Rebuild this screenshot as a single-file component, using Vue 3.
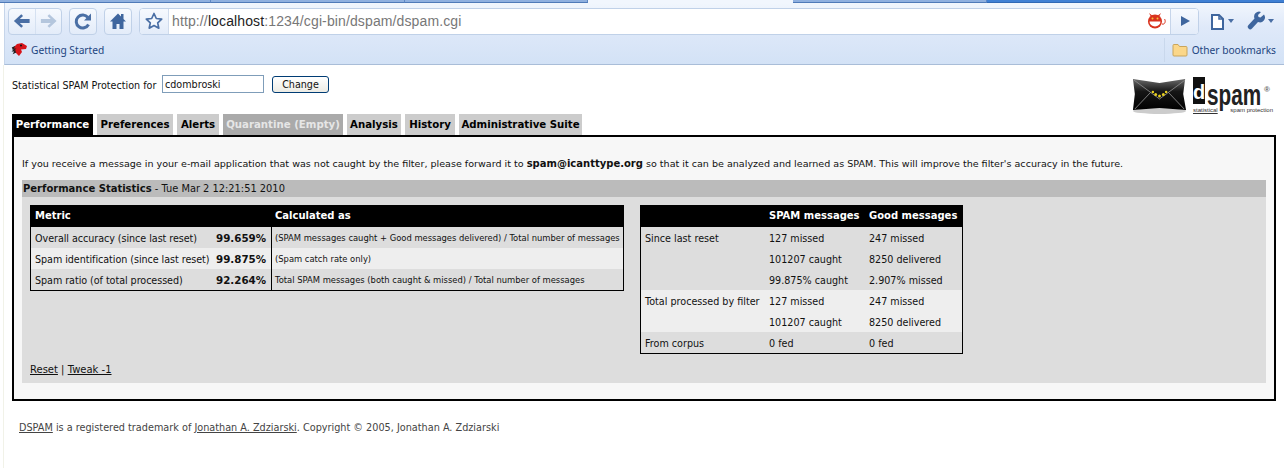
<script setup>
const tabs = [
  { label: 'Performance', cls: 'active', w: 81 },
  { label: 'Preferences', cls: '', w: 76 },
  { label: 'Alerts', cls: '', w: 42 },
  { label: 'Quarantine (Empty)', cls: 'dim', w: 120 },
  { label: 'Analysis', cls: '', w: 54 },
  { label: 'History', cls: '', w: 50 },
  { label: 'Administrative Suite', cls: '', w: 123 }
]
const metrics = [
  ['Overall accuracy (since last reset)', '99.659%', '(SPAM messages caught + Good messages delivered) / Total number of messages'],
  ['Spam identification (since last reset)', '99.875%', '(Spam catch rate only)'],
  ['Spam ratio (of total processed)', '92.264%', 'Total SPAM messages (both caught & missed) / Total number of messages']
]
const counts = [
  ['Since last reset', '127 missed', '247 missed', 'a'],
  ['', '101207 caught', '8250 delivered', 'a'],
  ['', '99.875% caught', '2.907% missed', 'a'],
  ['Total processed by filter', '127 missed', '247 missed', 'b'],
  ['', '101207 caught', '8250 delivered', 'b'],
  ['From corpus', '0 fed', '0 fed', 'a']
]
</script>

<template>
  <div class="window">
    <div class="tabstrip">
      <span class="ctab w1"></span>
      <span class="ctab w2"></span>
      <span class="ctab w3"></span>
      <span class="ctab open"></span>
      <span class="ctab w2"></span>
      <span class="ctab rest"></span>
    </div>
    <div class="chrome">
      <div class="toolbar">
        <div class="btn pair">
          <svg width="26" height="26" viewBox="0 0 26 26"><path d="M5 13l7.500-7 1.800 1.800-3.300 3.200H21v4H11l3.300 3.200-1.800 1.800z" fill="#4a6fa5"/></svg>
          <span class="sep"></span>
          <svg width="26" height="26" viewBox="0 0 26 26"><path d="M21 13l-7.500-7-1.800 1.800 3.300 3.200H5v4h10l-3.300 3.200 1.800 1.800z" fill="#b4c6dd"/></svg>
        </div>
        <div class="btn single">
          <svg width="24" height="24" viewBox="0 0 24 24"><path d="M17.500 15.500a6.500 6.500 0 1 1-.6-7" fill="none" stroke="#4a6fa5" stroke-width="3"/><path d="M20 4.500v7h-7z" fill="#4a6fa5"/></svg>
        </div>
        <div class="btn single">
          <svg width="24" height="24" viewBox="0 0 24 24"><path d="M12 4.500L4 12.500h2.500V20h4v-5h3v5h4v-7.500H20l-2.500-2.500V5h-2.500v2.500z" fill="#3f669e"/></svg>
        </div>
        <div class="omnibox">
          <div class="star">
            <svg width="20" height="20" viewBox="0 0 20 20"><path d="M10 2.500l2.300 5 5.400.6-4 3.700 1.100 5.400L10 14.500l-4.800 2.700 1.100-5.400-4-3.700 5.400-.6z" fill="#f4f8fd" stroke="#4a6fa5" stroke-width="1.700" stroke-linejoin="round"/></svg>
          </div>
          <div class="url"><span class="gray">http://</span><span class="host">localhost</span><span class="gray">:1234/cgi-bin/dspam/dspam.cgi</span></div>
          <svg class="devil" width="20" height="16" viewBox="0 0 20 16"><circle cx="8" cy="8.500" r="7" fill="#d9331e"/><path d="M2 0l2 4h3zM14 0l-2 4H9z" fill="#d9331e"/><path d="M2.500 8.500h11a5.500 5 0 0 1-11 0z" fill="#fff"/><circle cx="5.500" cy="5.500" r="1" fill="#f5c33b"/><circle cx="10.500" cy="5.500" r="1" fill="#f5c33b"/><path d="M15 11c3 1 4-3 2.500-5" fill="none" stroke="#d9331e"/></svg>
          <div class="go">
            <svg width="14" height="14" viewBox="0 0 14 14"><path d="M3 2l9 5-9 5z" fill="#3f669e"/></svg>
          </div>
        </div>
        <div class="menu first">
          <svg width="19" height="21" viewBox="0 0 19 21"><path d="M3 4h7l4 4v10H3z" fill="#fff" stroke="#3f669e" stroke-width="2"/><path d="M10 4v4h4" fill="none" stroke="#3f669e" stroke-width="1.500"/></svg>
          <i class="caret"></i>
        </div>
        <div class="menu second">
          <svg width="20" height="20" viewBox="0 0 20 20"><path d="M17 3.500l-3.500 3-2-.5-.5-2 3-3a5 5 0 0 0-6.500 6.500L1.500 14a2.400 2.400 0 0 0 3.500 3.500L11 11a5 5 0 0 0 6-7.500z" fill="#3f669e"/></svg>
          <i class="caret"></i>
        </div>
      </div>
      <div class="bookmarks">
        <div class="mark">
          <svg width="17" height="15" viewBox="0 0 17 15"><path d="M3 9V5l3-3 5-1 5 3-1 3-5 .5 1 2.500-3 4-3-3z" fill="#d7141a"/><path d="M1 6l2-1-1 2 2 0-2 2 2 0-1 2 2-1" fill="none" stroke="#222" stroke-width="1.200"/><circle cx="10" cy="3.500" r="1" fill="#111"/></svg>
          <span>Getting Started</span>
        </div>
        <div class="mark other">
          <svg width="16" height="14" viewBox="0 0 16 14"><path d="M1 2.500q0-1 1-1h4l1.500 2H14q1 0 1 1V12q0 1-1 1H2q-1 0-1-1z" fill="#fbd78a" stroke="#c9a55c"/></svg>
          <span>Other bookmarks</span>
        </div>
      </div>
    </div>

    <main class="page">
      <header class="top">
        <form class="who" @submit.prevent>
          <label>Statistical SPAM Protection for</label>
          <input value="cdombroski" />
          <button type="button">Change</button>
        </form>
        <div class="logo">
          <svg class="envelope" width="55" height="36" viewBox="0 0 58 36" preserveAspectRatio="none">
            <defs><linearGradient id="env" x1="0" y1="0" x2="0" y2="1"><stop offset="0" stop-color="#6a6a6a"/><stop offset=".4" stop-color="#161616"/><stop offset="1" stop-color="#000"/></linearGradient></defs>
            <ellipse cx="29" cy="33" rx="28" ry="3" fill="#ccc"/>
            <path d="M1 1l28 4 27-4-2 15 3 16-28-2-28 2 2-16z" fill="url(#env)"/>
            <path d="M2 2l27 19L56 2M3 31l17-17M55 31L38 14" fill="none" stroke="#8a8a8a" stroke-width=".9"/>
            <circle cx="22" cy="14" r="1.300" fill="#e8d020"/><circle cx="25" cy="16.500" r="1.500" fill="#e8d020"/><circle cx="29" cy="18" r="1.500" fill="#e8d020"/><circle cx="33" cy="16.500" r="1.500" fill="#e8d020"/><circle cx="36" cy="14" r="1.300" fill="#e8d020"/>
          </svg>
          <div class="wordmark">
            <div class="word"><span class="d">d</span><span class="spam">spam</span><span class="reg">®</span></div>
            <div class="tag"><span class="st">statistical</span><span>spam protection</span></div>
          </div>
        </div>
      </header>

      <nav class="tabs">
        <a v-for="t in tabs" :key="t.label" :class="t.cls" :style="{ width: t.w + 'px' }">{{ t.label }}</a>
      </nav>

      <section class="box">
        <p class="intro">If you receive a message in your e-mail application that was not caught by the filter, please forward it to <b>spam@icanttype.org</b> so that it can be analyzed and learned as SPAM. This will improve the filter's accuracy in the future.</p>
        <div class="panel">
          <h2><b>Performance Statistics</b> - Tue Mar 2 12:21:51 2010</h2>
          <div class="body">
            <div class="tables">
              <table class="t1">
                <thead><tr><th>Metric</th><th></th><th class="calc">Calculated as</th></tr></thead>
                <tbody>
                  <tr v-for="(m, i) in metrics" :key="i" :class="i === 1 ? 'b' : 'a'">
                    <td class="name">{{ m[0] }}</td><td class="val">{{ m[1] }}</td><td class="formula">{{ m[2] }}</td>
                  </tr>
                </tbody>
              </table>
              <table class="t2">
                <thead><tr><th></th><th>SPAM messages</th><th>Good messages</th></tr></thead>
                <tbody>
                  <tr v-for="(r, i) in counts" :key="i" :class="r[3]">
                    <td>{{ r[0] }}</td><td>{{ r[1] }}</td><td>{{ r[2] }}</td>
                  </tr>
                </tbody>
              </table>
            </div>
            <div class="links"><a>Reset</a> | <a>Tweak -1</a></div>
          </div>
        </div>
      </section>

      <footer class="foot"><a>DSPAM</a> is a registered trademark of <a>Jonathan A. Zdziarski</a>. Copyright © 2005, Jonathan A. Zdziarski</footer>
    </main>
  </div>
</template>

<style>
html, body { margin: 0; background: #fff; overflow: hidden; }
</style>

<style scoped>
.window { width: 1284px; height: 468px; overflow: hidden; font-family: "DejaVu Sans", sans-serif; font-size: 9.600px; color: #111; }
.tabstrip { display: flex; height: 3px; background: #eef4fd; }
.ctab { display: block; height: 3px; background: #8fb0df; border-right: 1px solid #5f88c4; border-bottom: 1px solid #4f7ab8; box-sizing: border-box; }
.w1 { width: 211px; }
.w2 { width: 194px; }
.w3 { width: 183px; }
.ctab.open { width: 205px; background: #f1f6fd; border: 0; }
.ctab.rest { flex: 1; background: #3f80d4; border: 0; border-bottom: 1px solid #2f68b5; }
.chrome { margin-left: 4px; background: linear-gradient(#f1f6fd, #dfe9f9 40%, #d3e2f6); border-bottom: 1px solid #a9bdd8; height: 62px; box-sizing: border-box; border-left: 1px solid #c6d5ea; }
.toolbar { display: flex; align-items: center; height: 26px; padding: 5px 0 0 3px; }
.btn { height: 25px; border: 1px solid #c0d1e8; border-radius: 4px; background: linear-gradient(#f6f9fe, #e3ecf9); display: flex; align-items: center; justify-content: center; margin-right: 7px; }
.pair { width: 52px; }
.sep { width: 1px; height: 25px; background: #d5e1f1; }
.single { width: 26px; }
.omnibox { flex: 1; height: 25px; border: 1px solid #c0d1e8; border-radius: 4px; display: flex; align-items: center; background: #fff; overflow: hidden; }
.star { width: 28px; height: 25px; display: flex; align-items: center; justify-content: center; background: linear-gradient(#f6f9fe, #e3ecf9); border-right: 1px solid #d0dced; }
.url { flex: 1; padding-left: 3px; font-size: 14px; font-family: "Liberation Sans", sans-serif; letter-spacing: .12px; white-space: nowrap; }
.gray { color: #777; }
.host { color: #222; }
.devil { margin-right: 3px; }
.go { width: 27px; height: 25px; display: flex; align-items: center; justify-content: center; background: linear-gradient(#f6f9fe, #e3ecf9); border-left: 1px solid #c6d5ea; }
.menu { display: flex; align-items: center; gap: 1px; }
.menu.first { width: 39px; margin-left: 10px; margin-right: -1px; gap: 0; }
.menu.second { width: 37px; }
.caret { display: block; border: 3.500px solid transparent; border-top: 4px solid #4a6fa5; border-bottom: 0; }
.bookmarks { display: flex; justify-content: space-between; align-items: center; height: 28px; padding: 3px 8px 0 6px; box-sizing: border-box; }
.mark { display: flex; align-items: center; gap: 3px; color: #1d4480; font-size: 10.200px; font-family: "Noto Sans", sans-serif; }
.other { border-left: 1px solid #c9d8ec; height: 24px; padding-left: 7px; gap: 4px; }
.page { margin-left: 3px; border-left: 1px solid #f1f2e8; padding: 10px 8px 0 8px; height: 403px; }
.top { display: flex; justify-content: space-between; height: 39px; }
.who { display: flex; align-items: flex-start; }
.who label { margin-top: 5px; width: 150px; white-space: nowrap; }
.who input { width: 102px; height: 18px; box-sizing: border-box; border: 1px solid #7f9db9; padding: 0 2px; margin: 0 8px 0 0; font: inherit; color: #111; outline: 0; }
.who button { width: 57px; height: 17px; margin-top: 1px; border: 1px solid #003c74; border-radius: 3px; background: linear-gradient(#fff, #ecebe4); font: inherit; color: #111; padding: 0; }
.logo { display: flex; align-items: flex-start; gap: 6px; margin-right: 3px; padding-top: 2px; }
.envelope { margin-top: 1px; }
.wordmark { width: 80px; }
.word { display: flex; align-items: flex-start; height: 30px; font-family: "Liberation Sans", sans-serif; font-weight: 700; color: #2a2a2a; position: relative; }
.d { background: #111; color: #fff; width: 12px; height: 27px; text-align: center; font-size: 20px; line-height: 31px; flex: none; }
.spam { flex: none; width: 54px; font-size: 30px; line-height: 22px; margin: 7px 0 0 2px; transform: scaleX(.69); transform-origin: left; white-space: nowrap; color: #222; }
.reg { position: absolute; right: 3px; top: 8px; font-size: 8px; line-height: 10px; color: #666; }
.tag { display: flex; justify-content: space-between; font-size: 6px; line-height: 7px; color: #333; white-space: nowrap; font-family: "Liberation Sans", sans-serif; }
.st { text-decoration: underline; }
.tabs { display: flex; gap: 4px; height: 21px; }
.tabs a { display: flex; align-items: center; justify-content: center; box-sizing: border-box; background: #ccc; color: #000; font-weight: 700; font-size: 10.200px; white-space: nowrap; }
.tabs a.active { background: #000; color: #fff; }
.tabs a.dim { background: #aaa; color: #e6e6e6; }
.box { border: 2px solid #000; background: #f7f7f7; padding: 0 8px 18px; height: 266px; box-sizing: border-box; }
.intro { margin: 0; padding-top: 20px; height: 43px; box-sizing: border-box; line-height: 13px; white-space: nowrap; font-size: 9.570px; }
.intro b { font-size: 10px; }
.panel { background: #ddd; }
.panel h2 { margin: 0; background: #bbb; height: 17px; line-height: 18px; font-size: 9.850px; font-weight: 400; padding-left: 1px; white-space: nowrap; }
.panel h2 b { font-size: 10px; }
.body { padding: 8px; height: 186px; box-sizing: border-box; display: flex; flex-direction: column; }
.tables { display: flex; align-items: flex-start; gap: 16px; height: 149px; }
table { border-collapse: separate; border-spacing: 0; border: 1px solid #000; table-layout: fixed; }
th { background: #000; color: #fff; height: 19px; font-weight: 700; text-align: left; padding: 0 0 2px 4px; font-size: 10px; white-space: nowrap; }
td { height: 20px; padding: 1px 0 0 4px; white-space: nowrap; }
tr.a td { background: #ddd; }
tr.b td { background: #eee; }
.t1 { width: 594px; }
.t1 th:nth-child(1), .t1 td:nth-child(1) { width: 181px; }
.t1 th:nth-child(2), .t1 td:nth-child(2) { width: 51px; }
.t1 td.name { letter-spacing: -.05px; }
.t1 td.val { font-weight: 700; text-align: right; padding: 1px 5px 0 0; font-size: 10.300px; }
.t1 td.formula { border-left: 1px solid #000; padding-left: 3px; font-size: 8.400px; }
.t2 { width: 323px; }
.t2 th:nth-child(1), .t2 td:nth-child(1) { width: 120px; }
.t2 th:nth-child(2), .t2 td:nth-child(2) { width: 96px; }
.links { margin-top: 9px; line-height: 13px; font-size: 10px; }
.links a, .foot a { text-decoration: underline; }
.foot { margin: 20px 0 0 7px; line-height: 13px; color: #444; font-size: 9.700px; }
</style>
